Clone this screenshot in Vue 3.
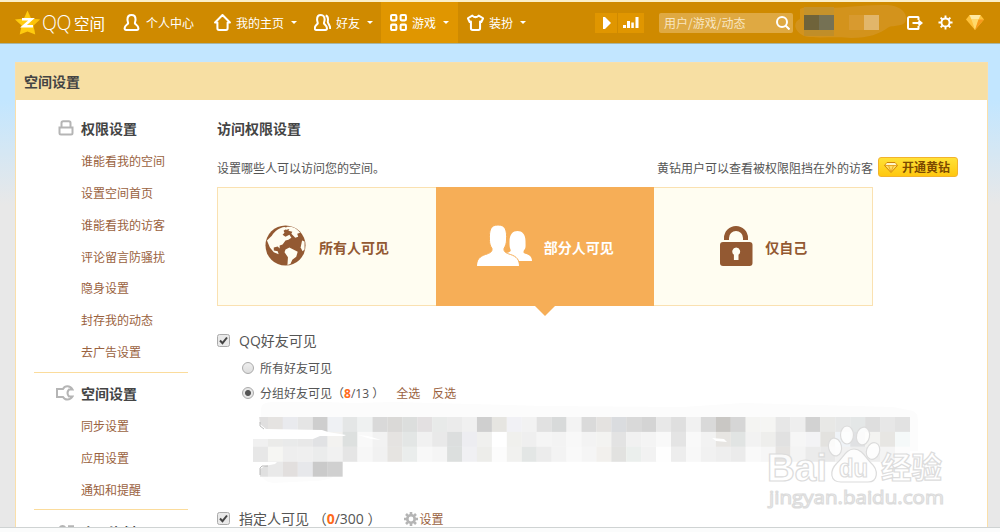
<template>
  <div class="page">
    <header class="nav">
      <div class="logo">
        <svg class="star" viewBox="0 0 26 26">
          <path d="M13 0.5l3.6 7.9 8.9 1-6.6 6 1.9 9.1-7.8-2.9-7.8 2.9 1.9-9.1-6.6-6 8.9-1z" fill="#ffcb0e" />
          <path d="M13 0.5l3.6 7.9 8.9 1-6.6 6 1.9 9.1z" fill="#f9b800" opacity="0.5" />
          <path d="M7.500 9.300h9.500L9 16.200h9.500" fill="none" stroke="#fff" stroke-width="2.500" />
        </svg>
        <span class="qq">QQ</span><span class="zone">空间</span>
      </div>

      <nav class="menu">
        <a v-for="m in menus" :key="m.name" class="menu-item" :class="[m.name, { active: m.active }]">
          <svg class="menu-icon" viewBox="0 0 16 16">
            <path v-for="d in m.paths" :key="d" :d="d" />
          </svg>
          <span>{{ m.label }}</span>
          <i v-if="m.arrow" class="caret"></i>
        </a>
      </nav>

      <div class="player">
        <span class="play"><svg viewBox="0 0 8 12"><path d="M0 0h2l6 6-6 6H0z" /></svg></span>
        <span class="bars"><svg viewBox="0 0 16 11"><path d="M0 8h3v3H0zM4 4h3v7H4zM8.300 5.500h2.500V11H8.300zM12.500 0H15.500v11h-3z" /></svg></span>
      </div>

      <div class="search">
        <span>用户/游戏/动态</span>
        <svg viewBox="0 0 14 14"><circle cx="6" cy="6" r="5" /><path d="M9.500 9.500l4 4" /></svg>
      </div>

      <svg class="user" viewBox="0 0 112 34">
        <path d="M5 4C12 0 24 3 34 3 48 3 66 0 86 0c14-1 24 4 25 12 1 10-9 8-17 10-10 7-20 11-38 11-12-2-38 1-47-2C-3 25-1 16 5 14z" fill="#d3931c" />
        <path d="M9 2h30v8H9z" fill="#c5922b" />
        <path d="M9 25h30v6H9z" fill="#c08e29" />
        <path d="M9 10h15v15H9z" fill="#6f633a" />
        <path d="M24 10h15v15H24z" fill="#757154" />
        <path d="M54 10h15v15H54z" fill="#d89a2f" />
        <path d="M69 10h15v15H69z" fill="#e2b66a" />
      </svg>

      <div class="tools">
        <svg class="exit" viewBox="0 0 16 14">
          <path d="M11.500 4V1.500Q11.500 1 11 1H2.500Q1 1 1 2.500v9Q1 13 2.500 13H11q.5 0 .5-.5V10M5.500 7H14M11.500 4.500L14.500 7l-3 2.500" />
        </svg>
        <svg class="gear" viewBox="0 0 16 16">
          <circle cx="8" cy="8" r="4.300" />
          <path d="M8 .5v3M8 12.500v3M.5 8h3M12.500 8h3M2.800 2.800l2 2M11.200 11.200l2 2M13.200 2.800l-2 2M4.800 11.200l-2 2" />
        </svg>
        <svg class="gem" viewBox="0 0 18 15">
          <path d="M3.500 0h11L18 4.500 9 15 0 4.500z" fill="#ffc13a" />
          <path d="M3.500 0h11L12.500 4.500h-7z" fill="#ffe9a3" />
          <path d="M5.500 4.500h7L9 15z" fill="#ffd96b" />
          <path d="M12.500 4.500H18L9 15z" fill="#f79a1c" />
        </svg>
      </div>
    </header>

    <main class="panel">
      <h1 class="panel-title">空间设置</h1>
      <div class="panel-body">
        <aside class="side">
          <section v-for="g in groups" :key="g.title" class="group">
            <h2>
              <svg class="group-icon" viewBox="0 0 18 16"><path v-for="d in g.paths" :key="d" :d="d" /></svg>
              {{ g.title }}
            </h2>
            <a v-for="i in g.items" :key="i">{{ i }}</a>
          </section>
        </aside>

        <div class="content">
          <h2>访问权限设置</h2>
          <div class="intro">
            <span>设置哪些人可以访问您的空间。</span>
            <span class="tip">黄钻用户可以查看被权限阻挡在外的访客</span>
            <button class="open-btn">
              <svg viewBox="0 0 14 11">
                <path d="M3 .5h8l2.500 3L7 10.500.5 3.500z" fill="#ffdc62" stroke="#cf8508" />
                <path d="M3 1h8l1.500 2H1.500z" fill="#fff5c9" />
                <path d="M1 3.500h12M4.500 3.500L7 10l2.500-6.500" fill="none" stroke="#e39a12" stroke-width=".8" />
              </svg>
              开通黄钻
            </button>
          </div>

          <div class="cards">
            <div class="card all">
              <svg class="globe" viewBox="0 0 42 42">
                <circle cx="21" cy="21" r="20.500" fill="#935932" />
                <path d="M7 11C10 6 15 2.500 20 2l3 1-4 3 1 2-2 2 3 2 4-2 2 3-3 2-3 1-3 4-3 1v3l-2-2-4 1v3l4 1 1 3-5-2-4-5-3-7z" fill="#fffdf1" />
                <path d="M22 2c6-.5 10 1 14 6l-3 1 1 3-3 1-4-4 1-2-4-1 1-2-4 1z" fill="#fffdf1" />
                <path d="M21 25l4-2 4 2 4.500 2.500-1.500 5-4 3-2 4.500-3 1 .5-8-3.500-5z" fill="#fffdf1" />
                <path d="M38 16l2.500 1v8l-2 2-2-4z" fill="#fffdf1" />
              </svg>
              <span>所有人可见</span>
            </div>
            <div class="card some">
              <svg class="people" viewBox="0 0 56 41">
                <path d="M31 36c2-4-3-5-7-7l5-1c5-1 5-2 4.500-3.500-1-2-1-4-1-8C32.500 9 36 6 40.500 6s8 3 8 10c0 4 .5 7-1 8.500-2 3-1 3.500 2 4.500 4 1.500 5.500 3.500 5.500 7z" />
                <path d="M-.5 41.500c0-7 3-10 9-12 5-1.500 7-3 6.500-6-1.500-2-2.500-5-2.500-8C12 5 13.500 0 21 0s9 5 8.500 15c0 3-1 6-2.500 8.500-.5 3 1.500 4.500 6.500 6 6 2 9 5 9 12z" stroke="#f6ae57" />
              </svg>
              <span>部分人可见</span>
            </div>
            <div class="card self">
              <svg class="lock" viewBox="0 0 33 40">
                <path d="M6.500 14v-2a9.500 9.500 0 0 1 19 0v2" fill="none" stroke="#935932" stroke-width="5" />
                <rect y="16" width="32.500" height="24" rx="3" fill="#935932" />
                <path d="M16.200 21.500a4 4 0 0 1 2.300 7.200V34h-4.600v-5.300a4 4 0 0 1 2.300-7.200z" fill="#fffdf1" />
              </svg>
              <span>仅自己</span>
            </div>
          </div>

          <div class="row check-row">
            <svg class="check" viewBox="0 0 13 13"><rect x=".5" y=".5" width="12" height="12" rx="2" /><path d="M3 6.500l2.500 2.700L10 3.500" /></svg>
            <span>QQ好友可见</span>
          </div>
          <div class="row radio-row">
            <i class="radio"></i><span>所有好友可见</span>
          </div>
          <div class="row radio-row">
            <i class="radio on"></i>
            <span>分组好友可见（<b>8</b>/13 ）</span>
            <a>全选</a><a>反选</a>
          </div>

          <!-- 打码的好友分组 -->
          <svg class="mosaic" viewBox="0 0 670 90">
            <path d="M8 8Q8 1 20 1L72 1 100 2 140 1 290 5 430 6 490 2 640 6 660 10Q665 12 665 20V50H652V61H90C90 70 82 80 60 80L20 82Q7 80 7 68V61H0V33L8 25z" fill="#fcfcfc" />
            <g v-for="(row, r) in mosaic" :key="r">
              <rect
                v-for="(c, k) in row"
                :key="k"
                :x="k * 14.93"
                :y="16 + r * 14.9"
                width="15"
                height="15"
                :fill="'#' + c"
              />
            </g>
            <path d="M0 15h6l1 8 6 5 56 1 6 2 18 3-2 1H67l-7 3H0zM105 34l10 1 13 4-10-1zM459 37l12 1 3 3-11-1zM0 61h24l-2 2-10 2-5 3v9H0z" fill="#fff" />
            <path d="M7 21v4l4 3M7 74v-7l2-2h6" fill="none" stroke="#aaa" stroke-width=".8" />
          </svg>

          <div class="row check-row">
            <svg class="check" viewBox="0 0 13 13"><rect x=".5" y=".5" width="12" height="12" rx="2" /><path d="M3 6.500l2.500 2.700L10 3.500" /></svg>
            <span>指定人可见 （<b>0</b>/300 ）</span>
            <a class="set">
              <svg viewBox="0 0 14 14">
                <circle cx="7" cy="7" r="3.700" />
                <path d="M7 0v3M7 11v3M0 7h3M11 7h3M2 2l2.200 2.200M9.800 9.800L12 12M12 2L9.800 4.200M4.200 9.800L2 12" />
              </svg>设置
            </a>
          </div>
        </div>
      </div>
    </main>
    <footer class="bottom"></footer>

    <svg class="watermark" viewBox="0 0 184 90">
      <g class="wm">
        <text class="big" x="2" y="56" textLength="60" lengthAdjust="spacingAndGlyphs">Bai</text>
        <ellipse cx="70" cy="22" rx="6.500" ry="9" transform="rotate(-12 70 22)" />
        <ellipse cx="82" cy="10" rx="6.500" ry="9" />
        <ellipse cx="98" cy="11" rx="6.500" ry="9" transform="rotate(12 98 11)" />
        <ellipse cx="108" cy="26" rx="6.500" ry="8.500" transform="rotate(20 108 26)" />
        <path d="M89 24c8 0 12 9 17 14 8 7 7 19-3 19H76c-11 0-12-11-4-19 6-5 9-14 17-14z" />
        <text class="du" x="74" y="52" textLength="29" lengthAdjust="spacingAndGlyphs">du</text>
        <text class="cn" x="116" y="53" textLength="61" lengthAdjust="spacingAndGlyphs">经验</text>
        <text class="url" x="4" y="79" textLength="175" lengthAdjust="spacingAndGlyphs">jingyan.baidu.com</text>
      </g>
    </svg>
  </div>
</template>

<script setup>
const menus = [
  {
    name: "center",
    label: "个人中心",
    paths: ["M8 1c2.600 0 3.800 1.800 3.800 4.200 0 1.800-.8 3-.6 3.600.3 1 3.300 2 3.300 4.700 0 .9-.5 1.500-1.500 1.500H3c-1 0-1.500-.6-1.500-1.500 0-2.700 3-3.700 3.300-4.700.2-.6-.6-1.800-.6-3.600C4.200 2.800 5.400 1 8 1z"],
  },
  { name: "home", label: "我的主页", arrow: true, paths: ["M8 1L1 8h2.200v5.500q0 1.500 1.500 1.500h6.600q1.500 0 1.500-1.500V8H15z"] },
  {
    name: "friend",
    label: "好友",
    arrow: true,
    paths: [
      "M6.500 1c2.300 0 3.500 1.800 3.500 4.200 0 1.800-.8 3-.6 3.600.3 1 2.800 2 2.800 4.700 0 .9-.5 1.500-1.500 1.500H2.200c-1 0-1.500-.6-1.500-1.500 0-2.700 2.500-3.700 2.800-4.700.2-.6-.6-1.800-.6-3.600C2.900 2.800 4.200 1 6.500 1z",
      "M11 1.500c2 .5 2.500 2.500 2 5.500-.3 2 2.300 3 2.300 7",
    ],
  },
  {
    name: "game",
    label: "游戏",
    arrow: true,
    active: true,
    paths: [
      "M2 1h3q1 0 1 1v3q0 1-1 1H2q-1 0-1-1V2q0-1 1-1z",
      "M11 1h3q1 0 1 1v3q0 1-1 1h-3q-1 0-1-1V2q0-1 1-1z",
      "M2 10h3q1 0 1 1v3q0 1-1 1H2q-1 0-1-1v-3q0-1 1-1z",
      "M11 10h3q1 0 1 1v3q0 1-1 1h-3q-1 0-1-1v-3q0-1 1-1z",
    ],
  },
  {
    name: "dress",
    label: "装扮",
    arrow: true,
    paths: ["M5 1.500Q8 4.500 11 1.500L15.200 4 13.500 7.500 12.300 7v6.500q0 1.500-1.500 1.500H5.200q-1.500 0-1.500-1.500V7L2.500 7.500.8 4z"],
  },
];

const groups = [
  {
    title: "权限设置",
    items: ["谁能看我的空间", "设置空间首页", "谁能看我的访客", "评论留言防骚扰", "隐身设置", "封存我的动态", "去广告设置"],
    paths: ["M3.500 7.500h13v5.500q0 1.500-1.500 1.500H5q-1.500 0-1.500-1.500z", "M5.500 7.500V3q0-1.700 1.700-1.700h5.600q1.700 0 1.700 1.700v4.500"],
  },
  {
    title: "空间设置",
    items: ["同步设置", "应用设置", "通知和提醒"],
    paths: ["M16.500 4.500C14 .5 9 .3 7 4H1v8h6c2 3.500 7 3.500 9.500-.5h-3.500Q10 8 13 4.500z"],
  },
  {
    title: "个人资料",
    items: [],
    paths: ["M3 8c0-8 7-8 7 0M12 2.300h6"],
  },
];

// 马赛克色块，每行从左到右
const mosaic = [
  "e0dfdf e5e3e1 e9eaee e5e5e5 cecece eff1f4 e4e6e6 eff1f1 d9d9d9 dad9d7 dcdedd e3e0e1 e8eae9 ebebeb f0f0f0 cfcfcf e6e5e1 f1f1f5 f2f2f2 e1e1e1 d8dada f3f3f3 dadada e4e2e0 dadcdf d9d9d9 d4d4d4 e8e8e8 dfdfdf f1f1f1 d9d9d9 c9c7c4 d6d6d6 f4f4f2 f5f5f3 e7e7e7 eeeeee d2d2d2 e8e8e6 e6e7e7 e4e7e7 dedede e7e7e7 e2e2e2",
  "f0f0f0 ebebe9 e9eaea e8e8e8 e1e2e4 f3f2f0 dde0df f9f9f9 f2f2f2 e5e3e1 e3e6e5 f1f1f1 e9e9e9 dcdede ededf1 f0f0ee ffffff f0f0ed efefef f5f5f5 f3f3f3 f8f8f8 f3f3f3 f3f3f1 e3e3e3 f1f1f1 f4f4f4 f9f9f9 e4e4e4 f9f9f9 f2f2f2 e7e5e2 e1e4e3 f2f2f2 eeeeec e1e1e1 f6f6f6 f3f3f5 e3e2df eff3f7 e0e1e3 f3f3f1 e7e6e3 f5f9f9",
  "e7e7e7 f6f6f3 eeeeee efefef ebecec f1f1f1 e5e5e5 f7f7f7 f1f1f1 e6e4e1 eaedec f8f8f8 f5f5f5 dcdfde f0f0f3 ededea fcfcfc f1f1ef e3e6e5 ececec f3f3f3 f9f9f9 f5f5f5 f2f0ed e2e2e0 ebefed f2f2f2 fefefe ededed f8f8f8 f1f1f1 eeeeee ebebeb f9f9f9 f6f6f6 e5e3e1 f4f4f4 ebebeb e9e9e9 f1f1f1 eeeeee eeeeee f4f4f4 fcfcfc",
  "e0e0e0 e9e9e9 e2dfde e7e8eb cacaca d0d0d0",
].map((row) => row.split(" "));
</script>

<style>
body {
  margin: 0;
  overflow: hidden;
}
</style>

<style scoped>
* {
  box-sizing: border-box;
}

.page {
  position: relative;
  display: flex;
  flex-direction: column;
  width: 1000px;
  height: 532px;
  overflow: hidden;
  background: linear-gradient(#c2e6ff 0, #c2e6ff 100px, #e8e8e8 205px);
  font: 12px "Noto Sans CJK SC", sans-serif;
  color: #555;
}

svg {
  display: block;
  flex: none;
}

/* top bar */
.nav {
  display: flex;
  align-items: center;
  flex: none;
  height: 44px;
  padding-left: 14px;
  border-top: 2px solid #fbefc9;
  border-bottom: 1px solid #a9b5a0;
  background: #cf8a00;
  color: #fff;
}

.logo {
  display: flex;
  align-items: center;
  width: 109px;
}

.star {
  width: 27px;
  height: 26px;
}

.qq {
  width: 31px;
  margin-left: 1px;
  font: 300 19.500px/26px "Open Sans", sans-serif;
  letter-spacing: -0.5px;
}

.zone {
  margin-left: 1px;
  font-size: 15.500px;
}

.menu {
  display: flex;
  align-self: stretch;
}

.menu-item {
  display: flex;
  align-items: center;
  color: #fff;
}

.menu-item.center {
  width: 91px;
}

.menu-item.home {
  width: 100px;
}

.menu-item.friend {
  width: 67px;
}

.menu-item.game {
  width: 77px;
  padding-left: 9px;
}

.menu-item.dress {
  width: 137px;
  padding-left: 9px;
}

.menu-item.active {
  background: #e09600;
}

.menu-icon {
  width: 17px;
  height: 17px;
  margin-right: 5px;
  fill: none;
  stroke: #fff;
  stroke-width: 1.900;
  stroke-linejoin: round;
}

.center .menu-icon {
  margin-right: 6px;
}

.caret {
  margin-left: 7px;
  border: 3px solid transparent;
  border-top-color: #fff;
  border-bottom: 0;
}

.player {
  display: flex;
  gap: 1px;
}

.player span {
  display: flex;
  align-items: center;
  justify-content: center;
  height: 20px;
  background: #e09600;
  fill: #fff;
}

.play {
  width: 22px;
}

.play svg {
  width: 8px;
  height: 12px;
  margin-left: 2px;
}

.bars {
  width: 26px;
}

.bars svg {
  width: 16px;
  height: 11px;
}

.search {
  display: flex;
  align-items: center;
  justify-content: space-between;
  width: 134px;
  height: 20px;
  margin-left: 15px;
  padding: 0 3px 0 5px;
  border-radius: 2px;
  background: #dfa942;
  color: #f8e6c2;
}

.search svg {
  width: 14px;
  height: 14px;
  fill: none;
  stroke: #fff;
  stroke-width: 2;
}

.user {
  width: 112px;
  height: 34px;
  margin: -2px 0 0 2px;
}

.tools {
  display: flex;
  align-items: center;
}

.exit,
.gear {
  fill: none;
  stroke: #fff;
  stroke-width: 2;
}

.exit {
  width: 16px;
  height: 14px;
}

.gear {
  width: 15px;
  height: 15px;
  margin-left: 15px;
}

.gem {
  width: 18px;
  height: 15px;
  margin-left: 13px;
}

/* panel */
.panel {
  flex: none;
  width: 973px;
  height: 465px;
  margin: 18px 0 0 15px;
  border: 1px solid #fadfaa;
  border-bottom: 0;
  background: #fff;
  overflow: hidden;
}

h1,
h2 {
  margin: 0;
  font-size: 14px;
  font-weight: bold;
  color: #444;
}

.panel-title {
  height: 37px;
  padding-left: 8px;
  background: #f7dfa3;
  line-height: 37px;
}

.panel-body {
  display: flex;
  padding: 13px 0 0 18px;
}

.side {
  width: 154px;
}

.group {
  padding-bottom: 4px;
  margin-bottom: 5px;
  border-bottom: 1px solid #fbdc9c;
}

.group h2 {
  display: flex;
  align-items: center;
  height: 32px;
  padding-bottom: 2px;
}

.group:last-child h2 {
  padding: 2px 0 0;
}

.group-icon {
  width: 18px;
  height: 16px;
  margin: 0 7px 0 22px;
  fill: none;
  stroke: #b5b5b5;
  stroke-width: 2;
}

.group a {
  display: block;
  padding-left: 47px;
  line-height: 31.850px;
}

a {
  color: #9a6240;
}

.content {
  width: 741px;
  margin-left: 29px;
}

.content h2 {
  line-height: 30px;
}

.intro {
  display: flex;
  align-items: center;
  height: 20px;
  margin-top: 14px;
}

.tip {
  margin-left: auto;
}

.open-btn {
  display: flex;
  align-items: center;
  gap: 4px;
  width: 80px;
  height: 20px;
  margin-left: 5px;
  padding: 0 5px;
  border: 1px solid #f3b32c;
  border-radius: 3px;
  background: linear-gradient(#ffe137, #ffc70f);
  font: bold 12px/18px "Noto Sans CJK SC", sans-serif;
  color: #7c4a00;
  white-space: nowrap;
}

.open-btn svg {
  width: 14px;
  height: 11px;
}

.cards {
  display: flex;
  width: 656px;
  height: 119px;
  margin: 10px 0 19px;
  border: 1px solid #fae1b1;
  background: #fffdf1;
}

.card {
  display: flex;
  align-items: center;
  width: 218px;
  padding-bottom: 2px;
  font-size: 14px;
  font-weight: bold;
  color: #935932;
}

.card span {
  margin-top: 2px;
}

.all {
  padding-left: 47px;
}

.some {
  position: relative;
  width: 219px;
  margin: -1px 0;
  padding-left: 41px;
  background: #f6ae57;
  color: #fff;
}

.some::after {
  content: "";
  position: absolute;
  top: 119px;
  left: 99px;
  border: 10px solid transparent;
  border-top-color: #f6ae57;
  border-bottom: 0;
}

.self {
  padding-left: 66px;
}

.globe {
  width: 41px;
  height: 41px;
  margin-right: 13px;
}

.people {
  width: 56px;
  height: 41px;
  margin-right: 11px;
  fill: #fff;
}

.lock {
  width: 33px;
  height: 40px;
  margin-right: 12px;
}

.row {
  display: flex;
  align-items: center;
}

.check-row {
  height: 29px;
  font-family: "Open Sans", "Noto Sans CJK SC", sans-serif;
  font-size: 14px;
}

.check {
  width: 13px;
  height: 13px;
  margin: 1px 9px 0 0;
  fill: #e9e9e9;
  stroke: #aaa;
}

.check path {
  fill: none;
  stroke: #444;
  stroke-width: 2;
}

.radio-row {
  height: 25px;
  padding: 2px 0 0 25px;
  font-family: "Open Sans", "Noto Sans CJK SC", sans-serif;
}

.radio {
  width: 12px;
  height: 12px;
  margin-right: 6px;
  border: 1px solid #aaa;
  border-radius: 50%;
  background: linear-gradient(#eee, #ddd);
}

.radio.on {
  background: radial-gradient(#555 0 2.500px, #e6e6e6 3.500px);
}

.radio-row a {
  margin-left: 12px;
}

b {
  color: #ff6a1a;
}

.mosaic {
  width: 670px;
  height: 90px;
  margin: -3px 0 12px 36px;
}

.set {
  display: flex;
  align-items: center;
  margin: 2px 0 0 23px;
  font-size: 12px;
}

.set svg {
  width: 14px;
  height: 14px;
  margin-right: 1px;
  fill: none;
  stroke: #b5b5b5;
  stroke-width: 2.600;
}

.bottom {
  flex: none;
  height: 5px;
  border-top: 1px solid #cfd3d3;
  background: #fbfcfc;
}

/* watermark above the page */
.watermark {
  position: absolute;
  left: 765px;
  top: 425px;
  width: 184px;
  height: 90px;
}

.wm {
  fill: rgba(255, 255, 255, 0.85);
  stroke: #dcdcdc;
  stroke-width: 1.200;
  font-family: "Liberation Sans", "Noto Sans CJK SC", sans-serif;
}

.big {
  font-size: 38px;
  font-weight: bold;
}

.du {
  font-size: 25px;
  font-weight: bold;
}

.cn {
  font-size: 30px;
  font-weight: bold;
}

.url {
  font-family: "Open Sans", sans-serif;
  font-size: 19px;
}
</style>
